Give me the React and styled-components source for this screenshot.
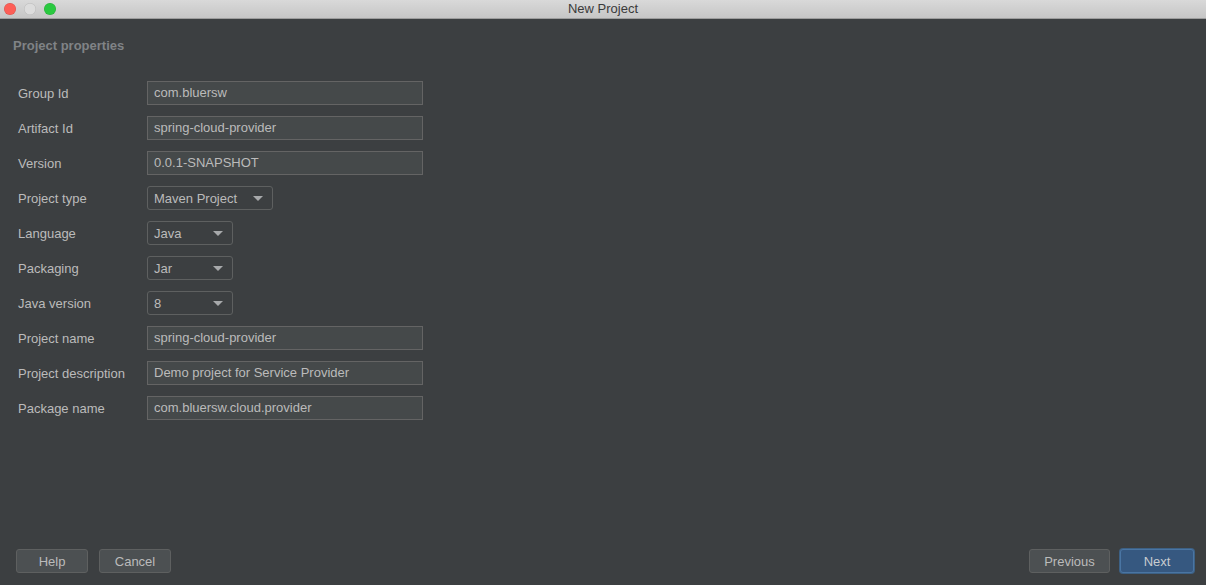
import React from "react";
import styled, { createGlobalStyle } from "styled-components";

const Global = createGlobalStyle`
  html, body { margin: 0; padding: 0; background: #3c3f41; }
  body { font-family: "Liberation Sans", Arial, sans-serif; font-size: 13px; }
`;

const Window = styled.div`
  width: 1206px;
  height: 585px;
  display: flex;
  flex-direction: column;
  background: #3c3f41;
  overflow: hidden;
`;

const TitleBar = styled.div`
  height: 18px;
  flex-shrink: 0;
  display: flex;
  align-items: center;
  position: relative;
  background: linear-gradient(#d9d9d9, #c6c6c6);
  border-bottom: 1px solid #9d9d9d;
`;

const Lights = styled.div`
  display: flex;
  gap: 8px;
  padding-left: 4px;
`;

const Light = styled.span`
  width: 12px;
  height: 12px;
  border-radius: 50%;
  background: ${(p) => p.$color};
  box-shadow: inset 0 0 0 0.5px rgba(0, 0, 0, 0.15);
`;

const Title = styled.div`
  position: absolute;
  left: 0;
  right: 0;
  text-align: center;
  color: #3a3a3a;
  font-size: 13px;
  line-height: 18px;
  pointer-events: none;
`;

const Body = styled.div`
  flex: 1;
  display: flex;
  flex-direction: column;
  padding: 19px 12px 12px 13px;
`;

const Heading = styled.div`
  color: #808386;
  font-weight: bold;
  font-size: 13px;
  line-height: 16px;
  margin-bottom: 27px;
`;

const Form = styled.div`
  display: grid;
  grid-template-columns: 129px auto;
  row-gap: 11px;
  padding-left: 5px;
  justify-items: start;
  align-items: center;
`;

const Label = styled.div`
  color: #bbbbbb;
  font-size: 13px;
`;

const Input = styled.div`
  box-sizing: border-box;
  width: 276px;
  height: 24px;
  background: #45494a;
  border: 1px solid #646464;
  color: #bbbbbb;
  padding: 0 6px;
  line-height: 22px;
  font-size: 13px;
`;

const Select = styled.div`
  box-sizing: border-box;
  width: ${(p) => p.$width}px;
  height: 24px;
  border: 1px solid #5e6060;
  border-radius: 3px;
  color: #bbbbbb;
  padding: 0 6px;
  display: flex;
  align-items: center;
  justify-content: space-between;
  font-size: 13px;
`;

const Arrow = styled.span`
  width: 0;
  height: 0;
  border-left: 5px solid transparent;
  border-right: 5px solid transparent;
  border-top: 5px solid #a7a9ab;
  margin-right: 3px;
`;

const Footer = styled.div`
  margin-top: auto;
  display: flex;
  align-items: center;
  padding-left: 3px;
`;

const Group = styled.div`
  display: flex;
  gap: ${(p) => (p.$right ? 10 : 11)}px;
  margin-left: ${(p) => (p.$right ? "auto" : "0")};
`;

const Button = styled.div`
  box-sizing: border-box;
  height: 24px;
  width: ${(p) => p.$width}px;
  display: flex;
  align-items: center;
  justify-content: center;
  border-radius: 3px;
  font-size: 13px;
  color: ${(p) => (p.$primary ? "#c8ccd0" : "#bbbbbb")};
  background: ${(p) => (p.$primary ? "#365880" : "#4c5052")};
  border: 1px solid ${(p) => (p.$primary ? "#4a75a3" : "#5e6060")};
  box-shadow: ${(p) => (p.$primary ? "0 0 0 1px #3d6185" : "none")};
`;

const fields = [
  ["Group Id", "input", "com.bluersw"],
  ["Artifact Id", "input", "spring-cloud-provider"],
  ["Version", "input", "0.0.1-SNAPSHOT"],
  ["Project type", "select", "Maven Project", 126],
  ["Language", "select", "Java", 86],
  ["Packaging", "select", "Jar", 86],
  ["Java version", "select", "8", 86],
  ["Project name", "input", "spring-cloud-provider"],
  ["Project description", "input", "Demo project for Service Provider"],
  ["Package name", "input", "com.bluersw.cloud.provider"],
];

export default function App() {
  return (
    <Window>
      <Global />
      <TitleBar>
        <Lights>
          <Light $color="#fd5f57" />
          <Light $color="#dcdcdc" />
          <Light $color="#2ac940" />
        </Lights>
        <Title>New Project</Title>
      </TitleBar>
      <Body>
        <Heading>Project properties</Heading>
        <Form>
          {fields.map(([label, kind, value, width]) => (
            <React.Fragment key={label}>
              <Label>{label}</Label>
              {kind === "input" ? (
                <Input>{value}</Input>
              ) : (
                <Select $width={width}>
                  {value}
                  <Arrow />
                </Select>
              )}
            </React.Fragment>
          ))}
        </Form>
        <Footer>
          <Group>
            <Button $width={72}>Help</Button>
            <Button $width={72}>Cancel</Button>
          </Group>
          <Group $right>
            <Button $width={81}>Previous</Button>
            <Button $width={74} $primary>
              Next
            </Button>
          </Group>
        </Footer>
      </Body>
    </Window>
  );
}
